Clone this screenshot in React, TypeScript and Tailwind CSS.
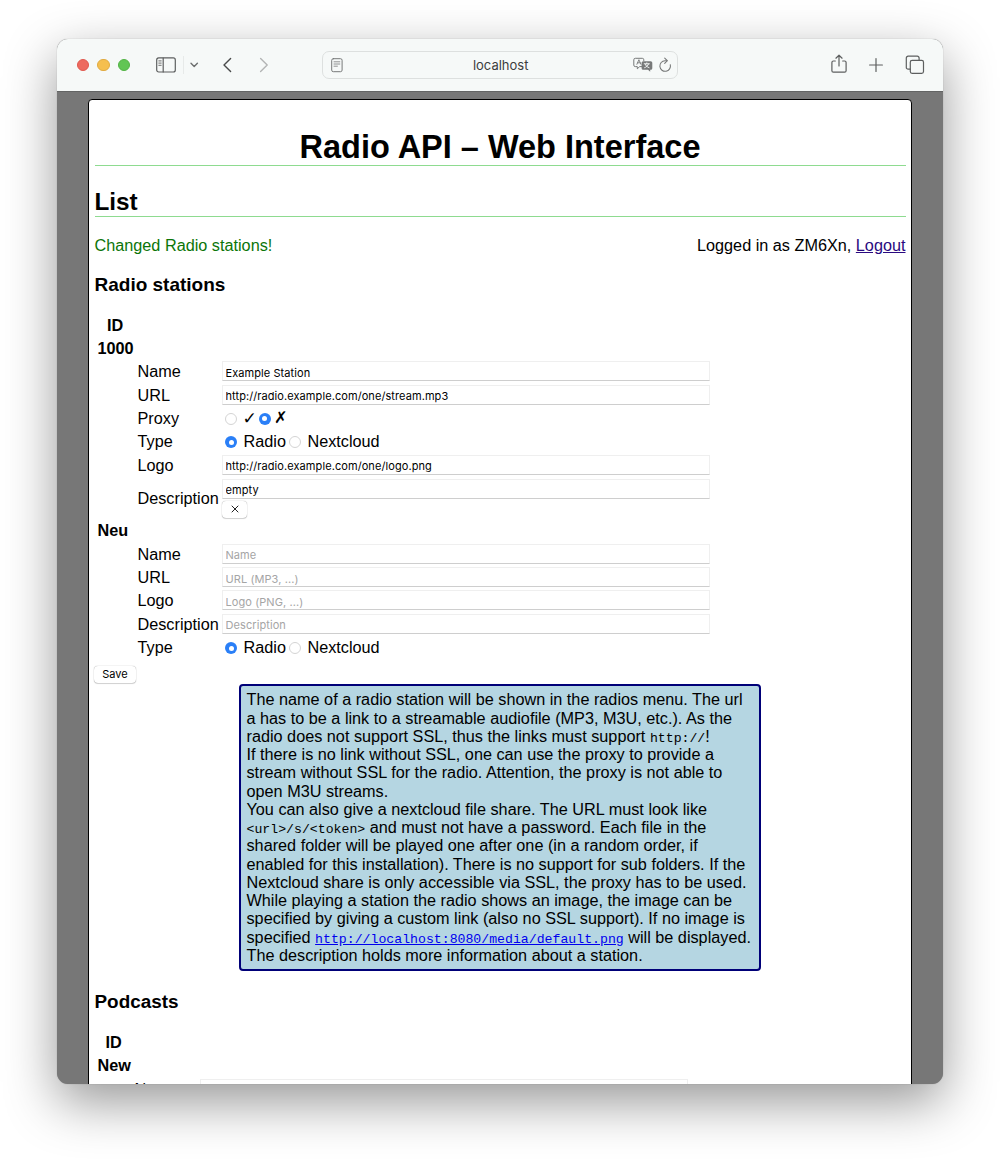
import React from "react";

function Field({ value, placeholder }: { value?: string; placeholder?: string }) {
  return (
    <input
      defaultValue={value}
      placeholder={placeholder}
      className="block h-[20px] w-[488px] border border-[#efefef] border-b-[#cecece] bg-white px-[2.5px] pt-[3px] font-[Inter,sans-serif] text-[11px] leading-[14px] tracking-[0.08px] text-black outline-none placeholder:text-[#a5a5a5]"
    />
  );
}

function Radio({ on }: { on?: boolean }) {
  return on ? (
    <span className="flex size-[12px] shrink-0 items-center justify-center rounded-full bg-[#2a7ff7]">
      <span className="size-[5px] rounded-full bg-white" />
    </span>
  ) : (
    <span className="block size-[12px] shrink-0 rounded-full border border-[#d4d4d4] bg-white" />
  );
}

function Row({ label, children, className = "h-[23.4px]" }: { label: string; children?: React.ReactNode; className?: string }) {
  return (
    <div className={`flex items-center ${className}`}>
      <div className="w-[84.5px] shrink-0 leading-[18px]">{label}</div>
      {children}
    </div>
  );
}

function TypeChoice() {
  return (
    <div className="flex items-center pl-[3px] leading-[18px]">
      <span className="pt-[2px]"><Radio on /></span>
      <span className="ml-[6.5px]">Radio</span>
      <span className="ml-[3px] pt-[2px]"><Radio /></span>
      <span className="ml-[6.5px]">Nextcloud</span>
    </div>
  );
}

const stroke = { fill: "none", strokeLinecap: "round", strokeLinejoin: "round" } as const;

function Toolbar() {
  return (
    <div className="flex h-[53px] shrink-0 items-center border-b border-[#636464] bg-[#f6f9f8]">
      <div className="ml-[20px] flex gap-[8px]">
        <span className="size-[12.4px] rounded-full border border-[#e0584e] bg-[#ed6a5f]" />
        <span className="size-[12.4px] rounded-full border border-[#e1ab41] bg-[#f5bf4f]" />
        <span className="size-[12.4px] rounded-full border border-[#52b344] bg-[#61c554]" />
      </div>
      <svg className="mb-px ml-[26px]" width="20" height="16" viewBox="0 0 20 16" {...stroke} stroke="#5d5f5f" strokeWidth="1.2">
        <rect x="0.7" y="0.9" width="18.6" height="14.1" rx="2" />
        <path d="M7.2 1v14" />
        <path d="M2.8 3.9h2.4M2.8 6.1h2.4M2.8 8.3h2.4" strokeWidth="0.9" />
      </svg>
      <span className="ml-[7px] h-[18px] w-px bg-[#e7eae9]" />
      <svg className="mb-px ml-[4.5px]" width="10" height="8" viewBox="0 0 10 8" {...stroke} stroke="#6d6f6f" strokeWidth="1.4">
        <path d="M2 2.3l3.2 3.2 3.2-3.2" />
      </svg>
      <svg className="mb-px ml-[23.5px]" width="10" height="16" viewBox="0 0 10 16" {...stroke} stroke="#494b4b" strokeWidth="1.4">
        <path d="M8.6 1.5L2 8l6.6 6.5" />
      </svg>
      <svg className="mb-px ml-[27px]" width="10" height="16" viewBox="0 0 10 16" {...stroke} stroke="#b3b5b5" strokeWidth="1.4">
        <path d="M1.6 1.5L8.2 8l-6.6 6.5" />
      </svg>
      <div className="ml-[52.5px] flex h-[28px] w-[356px] shrink-0 items-center rounded-[7px] border border-[#dde0df] pr-[5px] pl-[8px]">
        <svg width="12" height="15" viewBox="0 0 12 15" {...stroke} stroke="#777979" strokeWidth="1">
          <rect x="0.7" y="0.7" width="10.4" height="13" rx="1.6" />
          <path d="M3 3.8h5.8M3 6h5.8M3 8.2h3.4" strokeWidth="0.8" />
        </svg>
        <div className="ml-[12px] flex-1 pl-[14px] text-center font-[Inter,sans-serif] text-[13px] leading-[18px] text-[#3c3d3d]">
          localhost
        </div>
        <svg width="20" height="16" viewBox="0 0 20 16" {...stroke} stroke="#777979" strokeWidth="1">
          <path d="M9.2 9.6H6.7L4.3 11.8V9.6H2.3A1.5 1.5 0 0 1 .8 8.1V2.8A1.5 1.5 0 0 1 2.3 1.3h7a1.5 1.5 0 0 1 1.5 1.5v.8" />
          <path d="M3.9 7.3L5.9 2.7l2 4.6M4.6 5.8h2.6" strokeWidth="0.9" />
          <path d="M10.2 4.2h7.5a1.6 1.6 0 0 1 1.6 1.6v5.4a1.6 1.6 0 0 1-1.6 1.6h-.5v2l-2.2-2h-4.8a1.6 1.6 0 0 1-1.6-1.6V5.8a1.6 1.6 0 0 1 1.6-1.6z" fill="#777979" stroke="none" />
          <path d="M11.2 6.8h5.2M13.8 5.8v1M15.6 6.9c-.6 1.8-2.2 3.2-4 3.8M12.1 6.9c.5 1.8 2.1 3.2 4 3.8" stroke="#f6f9f8" strokeWidth="0.9" />
        </svg>
        <svg className="ml-[5px]" width="14" height="16" viewBox="0 0 14 16" {...stroke} stroke="#777979" strokeWidth="1.1">
          <path d="M12.3 7.7A5.3 5.3 0 1 1 7 3.7h2" />
          <path d="M6.7 1.2l2.6 2.5-2.6 2.6" />
        </svg>
      </div>
      <svg className="mb-[2px] ml-[152px]" width="18" height="20" viewBox="0 0 18 20" {...stroke} stroke="#5d5f5f" strokeWidth="1.2">
        <path d="M5.3 7H3.4a1.5 1.5 0 0 0-1.5 1.5v8.2a1.5 1.5 0 0 0 1.5 1.5h11.2a1.5 1.5 0 0 0 1.5-1.5V8.5A1.5 1.5 0 0 0 14.6 7h-1.9" />
        <path d="M9 12V1.3M5.9 4.2L9 1.2l3.1 3" />
      </svg>
      <svg className="mb-px ml-[20px]" width="16" height="16" viewBox="0 0 16 16" {...stroke} stroke="#5d5f5f" strokeWidth="1.2">
        <path d="M8 1.6v12.8M1.6 8h12.8" />
      </svg>
      <svg className="mb-px ml-[21px]" width="20" height="20" viewBox="0 0 20 20" {...stroke} stroke="#5d5f5f" strokeWidth="1.2">
        <path d="M5.3 14.2H3.1A1.8 1.8 0 0 1 1.3 12.4V3A1.8 1.8 0 0 1 3.1 1.2h9.2A1.8 1.8 0 0 1 14.1 3v2.3" />
        <rect x="5.3" y="5.4" width="13.2" height="13" rx="1.8" />
      </svg>
    </div>
  );
}

function Mono({ children }: { children: React.ReactNode }) {
  return <code className="font-['Liberation_Mono',monospace] text-[13.2px] leading-none">{children}</code>;
}

export default function App() {
  return (
    <div className="h-[1159px] w-[1000px] overflow-hidden bg-white pt-[39px] pl-[57px] font-['Liberation_Sans',Arial,sans-serif] text-[16.24px] text-black">
      <div className="flex h-[1045px] w-[886px] flex-col overflow-hidden rounded-[11px] bg-[#777777] shadow-[0_18px_52px_rgba(0,0,0,0.41),0_0_1px_rgba(0,0,0,0.35)]">
        <Toolbar />
        <main className="mx-auto mt-[7px] h-[1100px] w-[824px] shrink-0 rounded-[4px] border border-black bg-white px-[5.5px]">
          <h1 className="mt-[27px] h-[39px] border-b border-[#8edb90] text-center text-[32.5px] leading-[40px] font-bold">
            Radio API – Web Interface
          </h1>
          <h2 className="mt-[20px] h-[31px] border-b border-[#8edb90] text-[24.3px] leading-[31px] font-bold">List</h2>
          <div className="mt-[19px] flex h-[18px] justify-between leading-[18px]">
            <span className="text-[#0b7508]">Changed Radio stations!</span>
            <span>Logged in as ZM6Xn, <a className="text-[#2a0a80] underline">Logout</a></span>
          </div>
          <h3 className="mt-[19px] h-[24px] text-[19px] leading-[24px] font-bold">Radio stations</h3>

          <section className="mt-[17px] pl-[3px]">
            <div className="h-[23px] w-[35px] text-center leading-[23px] font-bold">ID</div>
            <div className="h-[22.5px] leading-[22.5px] font-bold">1000</div>
            <div className="pl-[40px]">
              <Row label="Name"><Field value="Example Station" /></Row>
              <Row label="URL"><Field value="http://radio.example.com/one/stream.mp3" /></Row>
              <Row label="Proxy">
                <div className="flex items-center pl-[3px] leading-[18px]">
                  <span className="pt-[2px]"><Radio /></span>
                  <span className="ml-[5.5px] w-[16px] font-['DejaVu_Sans',sans-serif] text-[17px] font-bold">✓</span>
                  <span className="pt-[2px]"><Radio on /></span>
                  <span className="ml-[3.5px] font-['DejaVu_Sans',sans-serif] text-[16.24px] font-bold">✗</span>
                </div>
              </Row>
              <Row label="Type"><TypeChoice /></Row>
              <Row label="Logo"><Field value="http://radio.example.com/one/logo.png" /></Row>
              <Row label="Description" className="h-[43px] pt-[1px]">
                <div className="flex flex-col">
                  <Field value="empty" />
                  <button className="mt-[2px] flex h-[17px] w-[25px] items-center justify-center rounded-[4px] bg-white shadow-[0_0_1px_rgba(0,0,0,0.45),0_1px_1px_rgba(0,0,0,0.15)]">
                    <svg width="8" height="8" viewBox="0 0 8 8" {...stroke} stroke="#222" strokeWidth="1">
                      <path d="M1 1l6 6M7 1L1 7" />
                    </svg>
                  </button>
                </div>
              </Row>
            </div>
            <div className="h-[22.5px] leading-[22.5px] font-bold">Neu</div>
            <div className="pl-[40px]">
              <Row label="Name"><Field placeholder="Name" /></Row>
              <Row label="URL"><Field placeholder="URL (MP3, ...)" /></Row>
              <Row label="Logo"><Field placeholder="Logo (PNG, ...)" /></Row>
              <Row label="Description"><Field placeholder="Description" /></Row>
              <Row label="Type"><TypeChoice /></Row>
            </div>
          </section>

          <button className="mt-[7.5px] -ml-[0.5px] block h-[17px] w-[42px] rounded-[4px] bg-white text-center font-[Inter,sans-serif] text-[11px] leading-[17px] shadow-[0_0_1px_rgba(0,0,0,0.45),0_1px_1px_rgba(0,0,0,0.15)]">
            Save
          </button>

          <div className="mx-auto mt-[1px] h-[287px] w-[522px] rounded-[4px] border-2 border-[#000078] bg-[#b5d6e2] px-[5.5px] pt-[4px] leading-[18.25px] whitespace-nowrap">
            The name of a radio station will be shown in the radios menu. The url<br />
            a has to be a link to a streamable audiofile (MP3, M3U, etc.). As the<br />
            radio does not support SSL, thus the links must support <Mono>http://</Mono>!<br />
            If there is no link without SSL, one can use the proxy to provide a<br />
            stream without SSL for the radio. Attention, the proxy is not able to<br />
            open M3U streams.<br />
            You can also give a nextcloud file share. The URL must look like<br />
            <Mono>&lt;url&gt;/s/&lt;token&gt;</Mono> and must not have a password. Each file in the<br />
            shared folder will be played one after one (in a random order, if<br />
            enabled for this installation). There is no support for sub folders. If the<br />
            Nextcloud share is only accessible via SSL, the proxy has to be used.<br />
            While playing a station the radio shows an image, the image can be<br />
            specified by giving a custom link (also no SSL support). If no image is<br />
            specified <a className="text-[#0000ee] underline"><Mono>http://localhost:8080/media/default.png</Mono></a> will be displayed.<br />
            The description holds more information about a station.
          </div>

          <h3 className="mt-[19px] h-[24px] text-[18.9px] leading-[24px] font-bold">Podcasts</h3>
          <section className="mt-[17px] pl-[3px]">
            <div className="h-[23px] w-[32px] text-center leading-[23px] font-bold">ID</div>
            <div className="h-[22.5px] leading-[22.5px] font-bold">New</div>
            <div className="flex h-[23.4px] items-center pl-[37px]">
              <div className="w-[65.5px] shrink-0 leading-[18px]">Name</div>
              <Field />
            </div>
          </section>
        </main>
      </div>
    </div>
  );
}
